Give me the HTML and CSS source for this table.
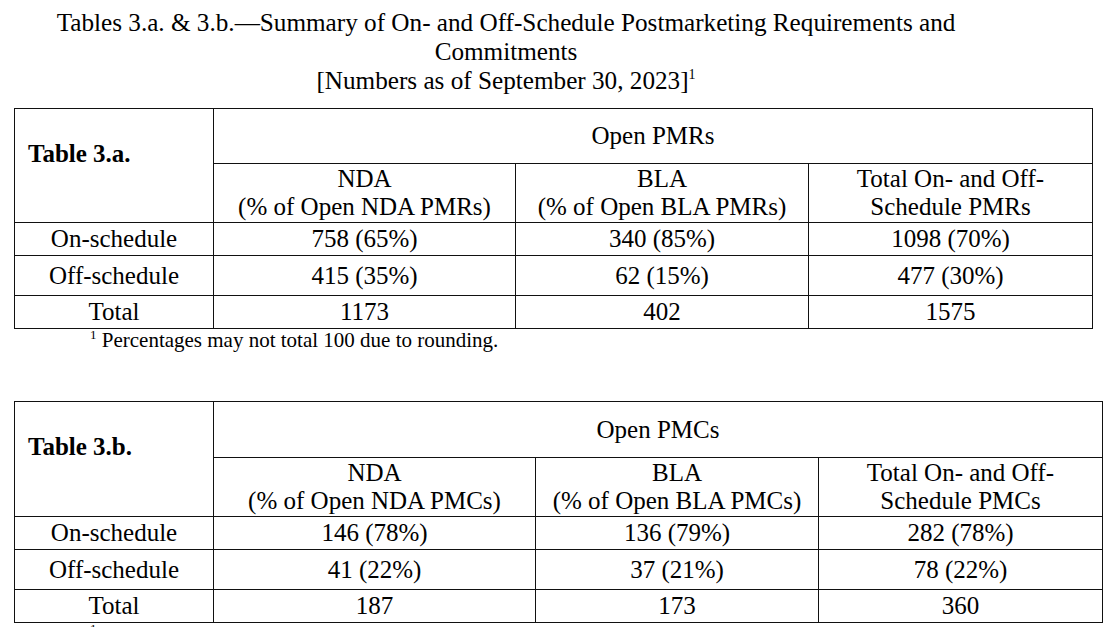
FILE: index.html
```html
<!DOCTYPE html>
<html lang="en">
<head>
<meta charset="utf-8">
<title>Tables 3.a. &amp; 3.b.</title>
<link rel="stylesheet" href="styles.css">
</head>
<body>
<main class="page">
  <h1 class="title">Tables 3.a. &amp; 3.b.—Summary of On- and Off-Schedule Postmarketing Requirements and Commitments<br>[Numbers as of September 30, 2023]<sup class="fn">1</sup></h1>

  <table class="grid grid-a">
    <colgroup>
      <col class="col-label">
      <col class="col-nda-a">
      <col class="col-bla-a">
      <col class="col-tot-a">
    </colgroup>
    <tr class="r-group">
      <th rowspan="2" class="label">Table 3.a.</th>
      <th colspan="3" class="group">Open PMRs</th>
    </tr>
    <tr class="r-head">
      <th>NDA<br>(% of Open NDA PMRs)</th>
      <th>BLA<br>(% of Open BLA PMRs)</th>
      <th>Total On- and Off-<br>Schedule PMRs</th>
    </tr>
    <tr class="r-short">
      <td>On-schedule</td><td>758 (65%)</td><td>340 (85%)</td><td>1098 (70%)</td>
    </tr>
    <tr class="r-tall">
      <td>Off-schedule</td><td>415 (35%)</td><td>62 (15%)</td><td>477 (30%)</td>
    </tr>
    <tr class="r-short">
      <td>Total</td><td>1173</td><td>402</td><td>1575</td>
    </tr>
  </table>
  <p class="note"><sup class="fn-note">1</sup> Percentages may not total 100 due to rounding.</p>

  <table class="grid grid-b">
    <colgroup>
      <col class="col-label">
      <col class="col-nda-b">
      <col class="col-bla-b">
      <col class="col-tot-b">
    </colgroup>
    <tr class="r-group">
      <th rowspan="2" class="label">Table 3.b.</th>
      <th colspan="3" class="group">Open PMCs</th>
    </tr>
    <tr class="r-head">
      <th>NDA<br>(% of Open NDA PMCs)</th>
      <th>BLA<br>(% of Open BLA PMCs)</th>
      <th>Total On- and Off-<br>Schedule PMCs</th>
    </tr>
    <tr class="r-short">
      <td>On-schedule</td><td>146 (78%)</td><td>136 (79%)</td><td>282 (78%)</td>
    </tr>
    <tr class="r-tall">
      <td>Off-schedule</td><td>41 (22%)</td><td>37 (21%)</td><td>78 (22%)</td>
    </tr>
    <tr class="r-short">
      <td>Total</td><td>187</td><td>173</td><td>360</td>
    </tr>
  </table>
  <p class="note"><sup class="fn-note">1</sup> Percentages may not total 100 due to rounding.</p>
</main>
</body>
</html>
```
FILE: styles.css
```css
html, body {
  margin: 0;
  padding: 0;
  background: #ffffff;
}

body {
  font-family: "Liberation Serif", "Times New Roman", serif;
  color: #000000;
  font-size: 25px;
}

.page {
  padding-top: 8px;
}

.title {
  margin: 0 0 13px 10px;
  width: 992px;
  font-size: 25.2px;
  font-weight: normal;
  line-height: 29px;
  text-align: center;
}

.fn {
  font-size: 14px;
  line-height: 0;
  vertical-align: 10px;
}

.grid {
  margin-left: 14px;
  border-collapse: collapse;
  table-layout: fixed;
}

.grid th,
.grid td {
  border: 1px solid #111111;
  padding: 0;
  font-weight: normal;
  text-align: center;
  vertical-align: middle;
  line-height: 28px;
  white-space: nowrap;
}

.grid th.label {
  font-weight: bold;
  text-align: left;
  vertical-align: top;
  padding: 31px 0 0 13px;
}

.grid-a { width: 1078px; }
.grid-b { width: 1088px; }

.col-label { width: 199px; }
.col-nda-a { width: 302px; }
.col-bla-a { width: 293px; }
.col-tot-a { width: 284px; }
.col-nda-b { width: 322px; }
.col-bla-b { width: 283px; }
.col-tot-b { width: 284px; }

.r-group th.group { height: 54px; }
.grid-b .r-group th.group { height: 55px; }
.r-head th { height: 58px; }
.r-short td { height: 32px; }
.r-tall td { height: 39px; }

.note {
  margin: 0 0 50px 0;
  padding-left: 90px;
  font-size: 21px;
  line-height: 22px;
}

.fn-note {
  font-size: 13px;
  line-height: 0;
  vertical-align: 8px;
}
```
